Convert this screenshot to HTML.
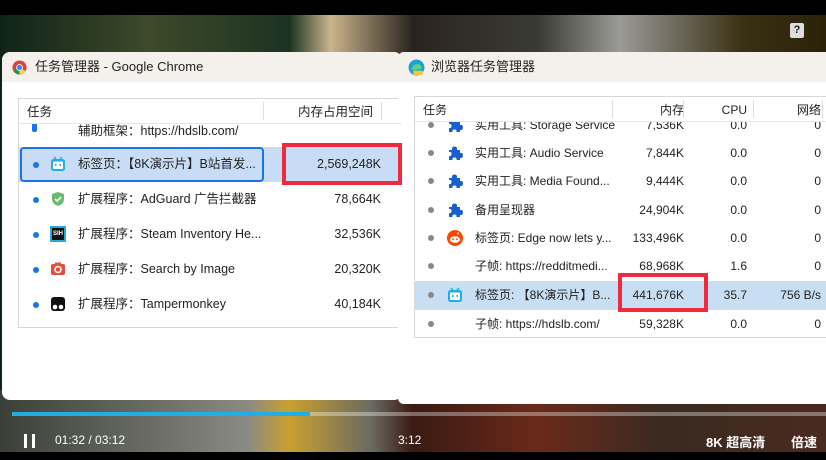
<!DOCTYPE html>
<html><head><meta charset="utf-8"><style>
*{margin:0;padding:0;box-sizing:border-box}
body{width:826px;height:460px;overflow:hidden;background:#000;position:relative;font-family:"Liberation Sans","Noto Sans CJK SC",sans-serif;color:#222}
.vid{position:absolute;left:0;top:15px;width:826px;height:437px;background:linear-gradient(90deg,#0f2418 0%,#3d4a2a 18%,#1c3322 35%,#c9b48c 40%,#2a2420 50%,#3a3a34 65%,#9a9a96 75%,#3a3014 90%,#2a2208 100%)}
.vb{position:absolute;left:0;top:390px;width:826px;height:62px;background:linear-gradient(90deg,#3a4038 0%,#8a8a82 30%,#c9a030 35%,#6a6a60 45%,#3a1a12 50%,#6a2a1a 65%,#3a2a20 80%,#4a2a20 100%)}
.win{position:absolute;background:#fff;border-radius:8px;overflow:hidden}
.tb{height:30px;background:#f4f0ec;font-size:13px;display:flex;align-items:center;padding-left:10px;line-height:16px}
.tbl{position:absolute;border:1px solid #d8d8d8;overflow:hidden;font-size:12.5px;line-height:16px}
.tbl span{line-height:16px;height:16px;white-space:nowrap}
.hd{position:absolute;left:0;right:0;top:0;height:25px;border-bottom:1px solid #e6e6e6;background:#fff;z-index:2}
.row{position:absolute;left:0;right:0}
.dot{width:6px;height:6px;border-radius:50%;position:absolute}
.r{position:absolute;text-align:right}
.red{position:absolute;border:4px solid #ee2a3c;z-index:3}
.ic{position:absolute;width:16px;height:16px}
</style></head><body>
<div class="vid"></div>
<div class="vb"></div>
<div style="position:absolute;left:790px;top:23px;width:14px;height:15px;background:#ddd;border-radius:2px;font-size:11px;font-weight:bold;text-align:center;color:#222;line-height:15px">?</div>

<svg width="0" height="0" style="position:absolute"><defs><symbol id="pz" viewBox="0 0 16 16"><path d="M2 5 H5 Q4.5 1.5 7.5 1.5 Q10.5 1.5 10 5 H13 V8 Q16 7.5 16 10.5 Q16 13.5 13 13 V15 H9.5 Q10 12.5 7.5 12.5 Q5 12.5 5.5 15 H2 V11 Q4.5 11.5 4.5 9 Q4.5 6.5 2 7 Z" fill="#1a5fd0"/></symbol><symbol id="bl" viewBox="0 0 16 16"><rect x="1" y="3" width="14" height="12" rx="2.5" fill="#23ade5"/><rect x="3" y="5.5" width="10" height="7.5" rx="1" fill="#fff"/><path d="M4 1 L6 3 M12 1 L10 3" stroke="#23ade5" stroke-width="1.5"/><rect x="5" y="8" width="1.5" height="2" fill="#23ade5"/><rect x="9.5" y="8" width="1.5" height="2" fill="#23ade5"/></symbol></defs></svg>

<!-- window 1 -->
<div class="win" style="left:2px;top:52px;width:400px;height:348px">
 <div class="tb"><svg width="15" height="15" viewBox="0 0 16 16" style="margin-right:8px"><circle cx="8" cy="8" r="7.5" fill="#db4437"/><path d="M8 8 L1.5 11.8 A7.5 7.5 0 0 0 8 15.5 Z" fill="#0f9d58"/><path d="M8 8 L14.5 11.8 A7.5 7.5 0 0 1 8 15.5 Z" fill="#ffcd40"/><circle cx="8" cy="8" r="3.6" fill="#fff"/><circle cx="8" cy="8" r="2.8" fill="#4285f4"/></svg>任务管理器 - Google Chrome</div>
 <div class="tbl" style="left:16px;top:46px;width:400px;height:230px">
  <div class="hd"><span style="position:absolute;left:8px;top:5px">任务</span><div style="position:absolute;left:244px;top:3px;width:1px;height:18px;background:#ddd"></div><span class="r" style="left:240px;width:114px;top:5px">内存占用空间</span><div style="position:absolute;left:362px;top:3px;width:1px;height:18px;background:#ddd"></div></div>
  <div class="row" style="top:20px;height:22px"><div style="position:absolute;left:13px;top:3px;width:5px;height:10px;background:#1a73e8;border-radius:2px"></div><span style="position:absolute;left:59px;top:4px">辅助框架：https://hdslb.com/</span></div>
  <div class="row" style="top:48px;height:35px;background:#c9dcf5;width:400px"></div>
  <div style="position:absolute;left:1px;top:48px;width:244px;height:35px;border:2px solid #1a73e8;border-radius:4px;z-index:1"></div>
  <div class="row" style="top:48px;height:35px;z-index:2"><div class="dot" style="left:14px;top:15px;background:#1a73e8"></div><svg class="ic" style="left:31px;top:9px"><use href="#bl"/></svg><span style="position:absolute;left:59px;top:9px">标签页：【8K演示片】B站首发...</span><span class="r" style="left:240px;width:122px;top:9px">2,569,248K</span></div>
  <div class="row" style="top:83px;height:35px"><div class="dot" style="left:14px;top:15px;background:#1a73e8"></div><svg class="ic" style="left:31px;top:9px" viewBox="0 0 16 16"><path d="M8 1 L14 3 L14 8 Q14 13 8 15 Q2 13 2 8 L2 3 Z" fill="#68bc71"/><path d="M5 8 L7.2 10.2 L11 6" stroke="#fff" stroke-width="1.6" fill="none"/></svg><span style="position:absolute;left:59px;top:9px">扩展程序：AdGuard 广告拦截器</span><span class="r" style="left:240px;width:122px;top:9px">78,664K</span></div>
  <div class="row" style="top:118px;height:35px"><div class="dot" style="left:14px;top:15px;background:#1a73e8"></div><div class="ic" style="left:31px;top:9px;background:#111;border:2px solid #2aa6d8;color:#fff;font-size:6px;font-weight:bold;text-align:center;line-height:12px">SIH</div><span style="position:absolute;left:59px;top:9px">扩展程序：Steam Inventory He...</span><span class="r" style="left:240px;width:122px;top:9px">32,536K</span></div>
  <div class="row" style="top:153px;height:35px"><div class="dot" style="left:14px;top:15px;background:#1a73e8"></div><svg class="ic" style="left:31px;top:9px" viewBox="0 0 16 16"><rect x="1" y="3" width="14" height="11" rx="2" fill="#e74c3c"/><rect x="5" y="1.5" width="6" height="3" fill="#e74c3c"/><circle cx="8" cy="8.5" r="3" fill="none" stroke="#fff" stroke-width="1.6"/></svg><span style="position:absolute;left:59px;top:9px">扩展程序：Search by Image</span><span class="r" style="left:240px;width:122px;top:9px">20,320K</span></div>
  <div class="row" style="top:188px;height:35px"><div class="dot" style="left:14px;top:15px;background:#1a73e8"></div><svg class="ic" style="left:31px;top:9px" viewBox="0 0 16 16"><rect x="1" y="1" width="14" height="14" rx="3" fill="#111"/><circle cx="5" cy="11" r="2.3" fill="#fff"/><circle cx="11" cy="11" r="2.3" fill="#fff"/></svg><span style="position:absolute;left:59px;top:9px">扩展程序：Tampermonkey</span><span class="r" style="left:240px;width:122px;top:9px">40,184K</span></div>
 </div>
 <div class="red" style="left:280px;top:91px;width:120px;height:42px"></div>
</div>

<!-- window 2 -->
<div class="win" style="left:398px;top:52px;width:440px;height:352px;border-radius:6px 0 0 6px">
 <div class="tb"><svg width="17" height="17" viewBox="0 0 16 16" style="margin-right:6px"><circle cx="8" cy="8" r="7.5" fill="#1f9fd8"/><path d="M3 9 Q5 4 11 5 Q14 7 12 10 Q9 9 6 11 Z" fill="#5ed17a"/><rect x="5" y="11" width="9" height="4" rx="1" fill="#f6c343"/></svg>浏览器任务管理器</div>
 <div class="tbl" style="left:16px;top:44px;width:430px;height:242px;font-size:12px">
  <div class="hd"><span style="position:absolute;left:8px;top:5px">任务</span><div style="position:absolute;left:197px;top:3px;width:1px;height:18px;background:#ddd"></div><span class="r" style="left:200px;width:69px;top:5px">内存</span><div style="position:absolute;left:268px;top:3px;width:1px;height:18px;background:#ddd"></div><span class="r" style="left:270px;width:62px;top:5px">CPU</span><div style="position:absolute;left:338px;top:3px;width:1px;height:18px;background:#ddd"></div><span class="r" style="left:340px;width:66px;top:5px">网络</span><div style="position:absolute;left:407px;top:3px;width:1px;height:18px;background:#ddd"></div></div>
  <div class="row" style="top:14px;height:28px"><div class="dot" style="left:13px;top:11px;background:#888"></div><svg class="ic" style="left:32px;top:6px"><use href="#pz"/></svg><span style="position:absolute;left:60px;top:6px">实用工具: Storage Service</span><span class="r" style="left:200px;width:69px;top:6px">7,536K</span><span class="r" style="left:270px;width:62px;top:6px">0.0</span><span class="r" style="left:340px;width:66px;top:6px">0</span></div>
  <div class="row" style="top:42px;height:28px"><div class="dot" style="left:13px;top:11px;background:#888"></div><svg class="ic" style="left:32px;top:6px"><use href="#pz"/></svg><span style="position:absolute;left:60px;top:6px">实用工具: Audio Service</span><span class="r" style="left:200px;width:69px;top:6px">7,844K</span><span class="r" style="left:270px;width:62px;top:6px">0.0</span><span class="r" style="left:340px;width:66px;top:6px">0</span></div>
  <div class="row" style="top:70px;height:28px"><div class="dot" style="left:13px;top:11px;background:#888"></div><svg class="ic" style="left:32px;top:6px"><use href="#pz"/></svg><span style="position:absolute;left:60px;top:6px">实用工具: Media Found...</span><span class="r" style="left:200px;width:69px;top:6px">9,444K</span><span class="r" style="left:270px;width:62px;top:6px">0.0</span><span class="r" style="left:340px;width:66px;top:6px">0</span></div>
  <div class="row" style="top:99px;height:28px"><div class="dot" style="left:13px;top:11px;background:#888"></div><svg class="ic" style="left:32px;top:6px"><use href="#pz"/></svg><span style="position:absolute;left:60px;top:6px">备用呈现器</span><span class="r" style="left:200px;width:69px;top:6px">24,904K</span><span class="r" style="left:270px;width:62px;top:6px">0.0</span><span class="r" style="left:340px;width:66px;top:6px">0</span></div>
  <div class="row" style="top:127px;height:28px"><div class="dot" style="left:13px;top:11px;background:#888"></div><svg class="ic" style="left:32px;top:6px" viewBox="0 0 16 16"><circle cx="8" cy="8" r="8" fill="#ff4500"/><ellipse cx="8" cy="9.5" rx="5" ry="3.3" fill="#fff"/><circle cx="6" cy="9.2" r="0.9" fill="#ff4500"/><circle cx="10" cy="9.2" r="0.9" fill="#ff4500"/><circle cx="11" cy="3.5" r="1" fill="#fff"/></svg><span style="position:absolute;left:60px;top:6px">标签页: Edge now lets y...</span><span class="r" style="left:200px;width:69px;top:6px">133,496K</span><span class="r" style="left:270px;width:62px;top:6px">0.0</span><span class="r" style="left:340px;width:66px;top:6px">0</span></div>
  <div class="row" style="top:155px;height:28px"><div class="dot" style="left:13px;top:11px;background:#888"></div><span style="position:absolute;left:60px;top:6px">子帧: https://redditmedi...</span><span class="r" style="left:200px;width:69px;top:6px">68,968K</span><span class="r" style="left:270px;width:62px;top:6px">1.6</span><span class="r" style="left:340px;width:66px;top:6px">0</span></div>
  <div class="row" style="top:184px;height:29px;background:#c8def3"><div class="dot" style="left:13px;top:11px;background:#888"></div><svg class="ic" style="left:32px;top:6px"><use href="#bl"/></svg><span style="position:absolute;left:60px;top:6px">标签页: 【8K演示片】B...</span><span class="r" style="left:200px;width:69px;top:6px">441,676K</span><span class="r" style="left:270px;width:62px;top:6px">35.7</span><span class="r" style="left:340px;width:66px;top:6px">756 B/s</span></div>
  <div class="row" style="top:213px;height:28px"><div class="dot" style="left:13px;top:11px;background:#888"></div><span style="position:absolute;left:60px;top:6px">子帧: https://hdslb.com/</span><span class="r" style="left:200px;width:69px;top:6px">59,328K</span><span class="r" style="left:270px;width:62px;top:6px">0.0</span><span class="r" style="left:340px;width:66px;top:6px">0</span></div>
 </div>
 <div class="red" style="left:220px;top:221px;width:90px;height:39px"></div>
</div>

<div style="position:absolute;left:12px;top:412px;width:298px;height:4px;background:#23ade5"></div>
<div style="position:absolute;left:310px;top:412px;width:516px;height:4px;background:rgba(255,255,255,.35)"></div>
<div style="position:absolute;left:24px;top:434px;width:3px;height:14px;background:#fff"></div>
<div style="position:absolute;left:32px;top:434px;width:3px;height:14px;background:#fff"></div>
<div style="position:absolute;left:55px;top:433px;color:#fff;font-size:12px">01:32 / 03:12</div>
<div style="position:absolute;left:398px;top:433px;color:#fff;font-size:12px">3:12</div>
<div style="position:absolute;left:706px;top:432px;color:#fff;font-size:13px;font-weight:bold">8K 超高清</div>
<div style="position:absolute;left:791px;top:432px;color:#fff;font-size:13px;font-weight:bold">倍速</div>
</body></html>
